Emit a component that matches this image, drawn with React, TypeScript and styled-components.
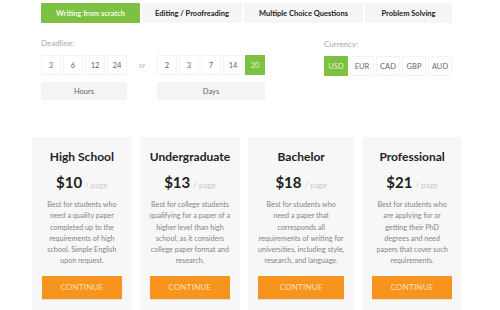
import React from 'react';
import styled, { createGlobalStyle } from 'styled-components';

const Global = createGlobalStyle`
  html, body { margin: 0; padding: 0; background: #fff; }
  body { font-family: Lato, "Open Sans", "Liberation Sans", sans-serif; }
  * { box-sizing: border-box; }
`;

const Page = styled.div`
  width: 500px;
  height: 310px;
  overflow: hidden;
  display: flex;
  flex-direction: column;
`;

const Top = styled.div`
  padding: 3px 48px 0 41px;
`;

const Tabs = styled.div`
  display: flex;
  gap: 2px;
`;

const Tab = styled.div<{ $w: number; $active?: boolean }>`
  width: ${p => p.$w}px;
  height: 20px;
  display: flex;
  align-items: center;
  justify-content: center;
  font-size: 7.5px;
  font-weight: 700;
  background: ${p => (p.$active ? '#7dc142' : '#f5f5f5')};
  color: ${p => (p.$active ? '#f4fbe9' : '#222')};
  border-radius: 1px;
`;

const Options = styled.div`
  display: flex;
  justify-content: space-between;
  margin-top: 15px;
`;

const Column = styled.div<{ $offset?: number }>`
  display: flex;
  flex-direction: column;
  padding-top: ${p => p.$offset || 0}px;
`;

const Label = styled.div`
  font-size: 8px;
  line-height: 10px;
  color: #aaa;
  height: 10px;
`;

const Row = styled.div`
  display: flex;
  align-items: flex-start;
  margin-top: 7px;
`;

const Group = styled.div`
  display: flex;
  flex-direction: column;
  gap: 7px;
`;

const Boxes = styled.div`
  display: flex;
  gap: 2px;
`;

const Box = styled.div<{ $w: number; $active?: boolean }>`
  width: ${p => p.$w}px;
  height: 20px;
  display: flex;
  align-items: center;
  justify-content: center;
  font-size: 7.5px;
  color: ${p => (p.$active ? '#e3f2d2' : '#666')};
  background: ${p => (p.$active ? '#7dc142' : '#fff')};
  border: 1px solid ${p => (p.$active ? '#7dc142' : '#f3f3f3')};
`;

const Sub = styled.div`
  height: 18px;
  background: #f4f4f4;
  display: flex;
  align-items: center;
  justify-content: center;
  font-size: 7.5px;
  color: #666;
`;

const Or = styled.div`
  width: 30px;
  height: 20px;
  display: flex;
  align-items: center;
  justify-content: center;
  font-size: 7px;
  color: #bbb;
`;

const Cards = styled.div`
  display: grid;
  grid-template-columns: repeat(4, 1fr);
  gap: 8px;
  padding: 0 38px 0 32px;
  margin-top: 37px;
`;

const Card = styled.div`
  background: #f7f7f7;
  padding: 13px 10px 20px;
  display: flex;
  flex-direction: column;
  align-items: center;
`;

const Title = styled.div`
  font-size: 12px;
  line-height: 14px;
  font-weight: 700;
  color: #222;
`;

const Price = styled.div`
  margin-top: 9px;
  line-height: 18px;
  display: flex;
  align-items: baseline;
  gap: 3px;
`;

const Amount = styled.span`
  font-size: 15px;
  font-weight: 700;
  color: #222;
`;

const Per = styled.span`
  font-size: 8px;
  color: #c8c8c8;
`;

const Desc = styled.div`
  margin-top: 5px;
  font-size: 7.2px;
  line-height: 11.3px;
  color: #858585;
  text-align: center;
  white-space: nowrap;
`;

const Button = styled.div`
  margin-top: 9px;
  width: 100%;
  height: 23px;
  background: #f7941d;
  color: #fde0b6;
  font-size: 8px;
  letter-spacing: 0.2px;
  display: flex;
  align-items: center;
  justify-content: center;
  box-shadow: 0 1px 1px rgba(0,0,0,0.08);
`;

const tabs = [
  { t: 'Writing from scratch', w: 99, active: true },
  { t: 'Editing / Proofreading', w: 100 },
  { t: 'Multiple Choice Questions', w: 119 },
  { t: 'Problem Solving', w: 87 },
];

const plans = [
  {
    title: 'High School',
    price: '$10',
    lines: ['Best for students who', 'need a quality paper', 'completed up to the', 'requirements of high', 'school. Simple English', 'upon request.'],
  },
  {
    title: 'Undergraduate',
    price: '$13',
    lines: ['Best for college students', 'qualifying for a paper of a', 'higher level than high', 'school, as it considers', 'college paper format and', 'research.'],
  },
  {
    title: 'Bachelor',
    price: '$18',
    lines: ['Best for students who', 'need a paper that', 'corresponds all', 'requirements of writing for', 'universities, including style,', 'research, and language.'],
  },
  {
    title: 'Professional',
    price: '$21',
    lines: ['Best for students who', 'are applying for or', 'getting their PhD', 'degrees and need', 'papers that cover such', 'requirements.'],
  },
];

export default function App() {
  return (
    <Page>
      <Global />
      <Top>
        <Tabs>
          {tabs.map(t => (
            <Tab key={t.t} $w={t.w} $active={t.active}>{t.t}</Tab>
          ))}
        </Tabs>
        <Options>
          <Column>
            <Label>Deadline:</Label>
            <Row>
              <Group>
                <Boxes>
                  {['3', '6', '12', '24'].map(v => <Box key={v} $w={20}>{v}</Box>)}
                </Boxes>
                <Sub>Hours</Sub>
              </Group>
              <Or>or</Or>
              <Group>
                <Boxes>
                  {['2', '3', '7', '14', '20'].map(v => <Box key={v} $w={20} $active={v === '20'}>{v}</Box>)}
                </Boxes>
                <Sub>Days</Sub>
              </Group>
            </Row>
          </Column>
          <Column $offset={1}>
            <Label>Currency:</Label>
            <Row>
              <Boxes>
                {['USD', 'EUR', 'CAD', 'GBP', 'AUD'].map(v => <Box key={v} $w={24} $active={v === 'USD'}>{v}</Box>)}
              </Boxes>
            </Row>
          </Column>
        </Options>
      </Top>
      <Cards>
        {plans.map(p => (
          <Card key={p.title}>
            <Title>{p.title}</Title>
            <Price>
              <Amount>{p.price}</Amount>
              <Per>/ page</Per>
            </Price>
            <Desc>
              {p.lines.map((l, i) => (
                <React.Fragment key={i}>{l}{i < p.lines.length - 1 && <br />}</React.Fragment>
              ))}
            </Desc>
            <Button>CONTINUE</Button>
          </Card>
        ))}
      </Cards>
    </Page>
  );
}
